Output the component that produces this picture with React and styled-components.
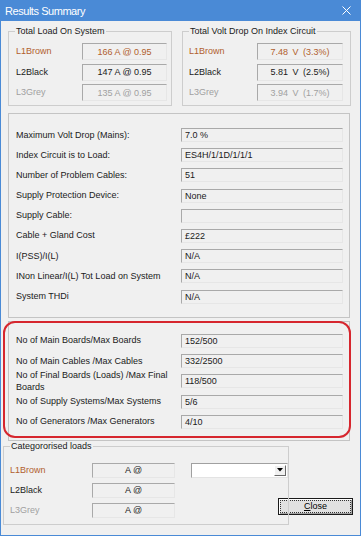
import React from 'react';
import styled, { createGlobalStyle } from 'styled-components';

const Global = createGlobalStyle`
  html, body { margin: 0; padding: 0; background: #f0f0f0; }
  body { font-family: "Liberation Sans", Arial, sans-serif; font-size: 9px; color: #1a1a1a; }
  * { box-sizing: border-box; }
`;

const tones = { brown: '#b0602e', black: '#1a1a1a', grey: '#a0a0a0' };
const BLUE = '#4a8ad6';

const Window = styled.div`
  width: 361px;
  height: 536px;
  display: flex;
  flex-direction: column;
  background: #f0f0f0;
`;

const TitleBar = styled.div`
  height: 21px;
  flex: none;
  background: ${BLUE};
  color: #fff;
  display: flex;
  align-items: center;
  justify-content: space-between;
  padding: 0 10px 0 5px;
  font-size: 11px;
  letter-spacing: -0.45px;
`;

const Body = styled.div`
  flex: 1;
  display: flex;
  flex-direction: column;
  border: 1px solid ${BLUE};
  border-top: none;
`;

const TopRow = styled.div`
  display: flex;
  gap: 10px;
  margin: 10px 0 0 7px;
`;

const Group = styled.div`
  position: relative;
  width: ${p => p.$w}px;
  border: 1px solid #cdcdcd;
  display: grid;
  grid-template-columns: 1fr ${p => p.$box}px;
  align-items: center;
  row-gap: ${p => p.$gap}px;
  padding: ${p => p.$pad};
`;

const Legend = styled.span`
  position: absolute;
  top: -6px;
  left: 6px;
  padding: 0 1px;
  line-height: 11px;
  background: #f0f0f0;
  color: #1a1a1a;
  white-space: nowrap;
`;

const Label = styled.span`
  color: ${p => tones[p.$tone || 'black']};
  white-space: nowrap;
  line-height: 11px;
`;

const WrapLabel = styled.span`
  color: #1a1a1a;
  line-height: 12px;
`;

const Box = styled.div`
  height: ${p => p.$h}px;
  display: flex;
  align-items: center;
  justify-content: ${p => (p.$center ? 'center' : 'flex-start')};
  padding: 0 3px;
  border-top: 1px solid #a9a9a9;
  border-left: 1px solid #a9a9a9;
  border-bottom: 1px solid #e6e6e6;
  border-right: 1px solid #e6e6e6;
  color: ${p => tones[p.$tone || 'black']};
  white-space: pre;
  word-spacing: ${p => (p.$wide ? '2px' : '0')};
`;

const Panel = styled.div`
  position: relative;
  width: 342px;
  margin: ${p => p.$margin};
  border: 1px solid #c4c4c4;
  display: grid;
  grid-template-columns: 1fr 162px;
  grid-auto-rows: 14px;
  align-items: center;
  row-gap: ${p => p.$gap}px;
  padding: ${p => p.$pad};
`;

const Highlight = styled.div`
  position: absolute;
  left: -6px;
  top: -1px;
  width: 348px;
  height: 117px;
  border: 2px solid #d6262e;
  border-radius: 12px;
  pointer-events: none;
`;

const BottomRow = styled.div`
  display: flex;
  align-items: flex-end;
  margin: 5px 0 0 2px;
`;

const CatGroup = styled.div`
  position: relative;
  width: 286px;
  height: 79px;
  border: 1px solid #cdcdcd;
  display: grid;
  grid-template-columns: 66px 83px 97px;
  grid-template-rows: repeat(3, 15px);
  column-gap: 16px;
  row-gap: 5px;
  align-items: center;
  padding: 16px 0 0 6px;
`;

const Combo = styled.div`
  height: 15px;
  background: #fff;
  border-top: 1px solid #a0a0a0;
  border-left: 1px solid #a0a0a0;
  border-bottom: 1px solid #e3e3e3;
  border-right: 1px solid #e3e3e3;
  display: flex;
  justify-content: flex-end;
  padding: 1px;
`;

const ComboButton = styled.div`
  width: 12px;
  height: 100%;
  background: #f0f0f0;
  border-top: 1px solid #fff;
  border-left: 1px solid #fff;
  border-bottom: 1px solid #696969;
  border-right: 1px solid #696969;
  display: flex;
  align-items: center;
  justify-content: center;
`;

const CloseButton = styled.button`
  width: 75px;
  height: 17px;
  margin: 0 0 10px -11px;
  padding: 1px;
  background: #e1e1e1;
  border: 1px solid #1a1a1a;
  box-shadow: inset 1px 1px 0 #fff, inset -1px -1px 0 #a0a0a0;
  font-family: inherit;
  font-size: 9px;
  color: #000;
  display: flex;
`;

const Focus = styled.span`
  flex: 1;
  border: 1px dotted #333;
  display: flex;
  align-items: center;
  justify-content: center;
  line-height: 10px;
`;

const phaseLoad = [
  ['L1Brown', 'brown', '166 A @ 0.95'],
  ['L2Black', 'black', '147 A @ 0.95'],
  ['L3Grey', 'grey', '135 A @ 0.95'],
];
const phaseVolt = [
  ['L1Brown', 'brown', '7.48 V (3.3%)'],
  ['L2Black', 'black', '5.81 V (2.5%)'],
  ['L3Grey', 'grey', '3.94 V (1.7%)'],
];
const summary = [
  ['Maximum Volt Drop (Mains):', '7.0 %'],
  ['Index Circuit is to Load:', 'ES4H/1/1D/1/1/1'],
  ['Number of Problem Cables:', '51'],
  ['Supply Protection Device:', 'None'],
  ['Supply Cable:', ''],
  ['Cable + Gland Cost', '£222'],
  ['I(PSS)/I(L)', 'N/A'],
  ['INon Linear/I(L) Tot Load on System', 'N/A'],
  ['System THDi', 'N/A'],
];
const limits = [
  [['No of Main Boards/Max Boards'], '152/500'],
  [['No of Main Cables /Max Cables'], '332/2500'],
  [['No of Final Boards (Loads) /Max Final', 'Boards'], '118/500'],
  [['No of Supply Systems/Max Systems'], '5/6'],
  [['No of Generators /Max Generators'], '4/10'],
];

export default function App() {
  return (
    <>
      <Global />
      <Window>
        <TitleBar>
          <span>Results Summary</span>
          <svg width="9" height="9" viewBox="0 0 9 9">
            <path d="M0.5 0.5 L8.5 8.5 M8.5 0.5 L0.5 8.5" stroke="#fff" strokeWidth="1" />
          </svg>
        </TitleBar>
        <Body>
          <TopRow>
            <Group $w={164} $box={85} $gap={3.5} $pad="11px 4px 4px 7px">
              <Legend>Total Load On System</Legend>
              {phaseLoad.map(([l, t, v]) => (
                <React.Fragment key={l}>
                  <Label $tone={t}>{l}</Label>
                  <Box $h={17} $center $tone={t}>{v}</Box>
                </React.Fragment>
              ))}
            </Group>
            <Group $w={169} $box={86} $gap={3.5} $pad="11px 7px 4px 6px">
              <Legend>Total Volt Drop On Index Circuit</Legend>
              {phaseVolt.map(([l, t, v]) => (
                <React.Fragment key={l}>
                  <Label $tone={t}>{l}</Label>
                  <Box $h={17} $center $wide $tone={t}>{v}</Box>
                </React.Fragment>
              ))}
            </Group>
          </TopRow>

          <Panel $margin="7px 0 0 7px" $gap={6.2} $pad="14px 6px 13.4px 7px">
            {summary.map(([l, v]) => (
              <React.Fragment key={l}>
                <Label>{l}</Label>
                <Box $h={14}>{v}</Box>
              </React.Fragment>
            ))}
          </Panel>

          <Panel $margin="3px 0 0 7px" $gap={6.25} $pad="12px 6px 11px 7px">
            {limits.map(([lines, v]) => (
              <React.Fragment key={v}>
                {lines.length > 1 ? (
                  <WrapLabel>{lines[0]}<br />{lines[1]}</WrapLabel>
                ) : (
                  <Label>{lines[0]}</Label>
                )}
                <Box $h={14}>{v}</Box>
              </React.Fragment>
            ))}
            <Highlight />
          </Panel>

          <BottomRow>
            <CatGroup>
              <Legend>Categororised loads</Legend>
              <Label $tone="brown">L1Brown</Label>
              <Box $h={15} $center>A @</Box>
              <Combo>
                <ComboButton>
                  <svg width="6" height="4" viewBox="0 0 6 4">
                    <path d="M0 0 H6 L3 3.5 Z" fill="#000" />
                  </svg>
                </ComboButton>
              </Combo>
              <Label>L2Black</Label>
              <Box $h={15} $center>A @</Box>
              <span />
              <Label $tone="grey">L3Grey</Label>
              <Box $h={15} $center>A @</Box>
              <span />
            </CatGroup>
            <CloseButton>
              <Focus><u>C</u>lose</Focus>
            </CloseButton>
          </BottomRow>
        </Body>
      </Window>
    </>
  );
}
